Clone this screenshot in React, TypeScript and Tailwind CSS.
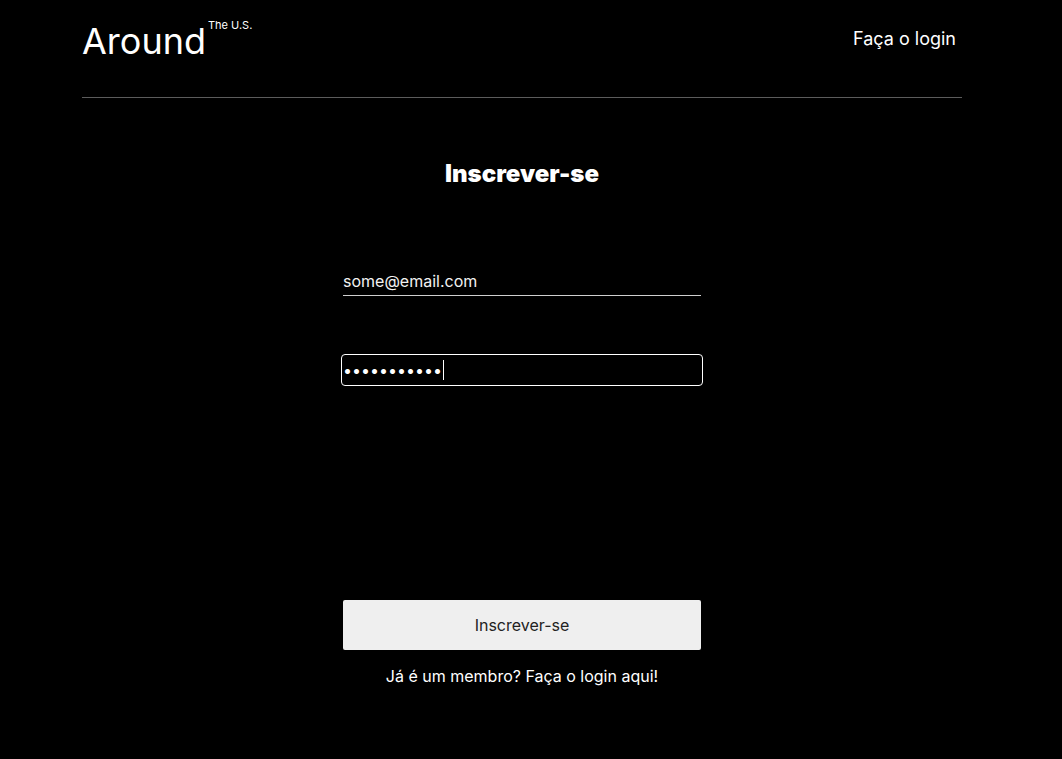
import React from 'react'

export default function App() {
  return (
    <div className="min-h-screen bg-black text-white font-['Inter',sans-serif]">
      <div className="w-[880px] ml-[82px]">
        {/* Header */}
        <header className="h-[98px] flex justify-between items-start border-b border-[#5c5c5c]">
          <div className="flex items-start pt-[19px]">
            <span className="text-[36px] leading-[44px]">Around</span>
            <span className="text-[11px] leading-none ml-[2px] mt-[1px]">The U.S.</span>
          </div>
          <a className="text-[18px] leading-[22px] mt-[28px] mr-[6px] cursor-pointer">Faça o login</a>
        </header>

        {/* Form */}
        <main className="flex flex-col items-center">
          <h1 className="mt-[62px] text-[24px] leading-[28px] font-black">Inscrever-se</h1>

          <div className="mt-[82px] w-[358px] border-b border-[#cfcfcf] pb-[3px]">
            <div className="text-[16px] leading-[22px] text-[#f2f2f2]">some@email.com</div>
          </div>

          <div className="mt-[58px] w-[362px] h-[32px] border border-white rounded-[4px] flex items-center pl-[1px]">
            <span className="text-[16px] leading-none">•••••••••••</span>
            <span className="w-px h-[20px] bg-white ml-[1px]" />
          </div>

          <button className="mt-[214px] w-[358px] h-[50px] bg-[#efefef] rounded-[2px] text-[16px] text-[#222]">
            Inscrever-se
          </button>

          <p className="mt-[16px] text-[16px] leading-[20px]">Já é um membro? Faça o login aqui!</p>
        </main>
      </div>
    </div>
  )
}
